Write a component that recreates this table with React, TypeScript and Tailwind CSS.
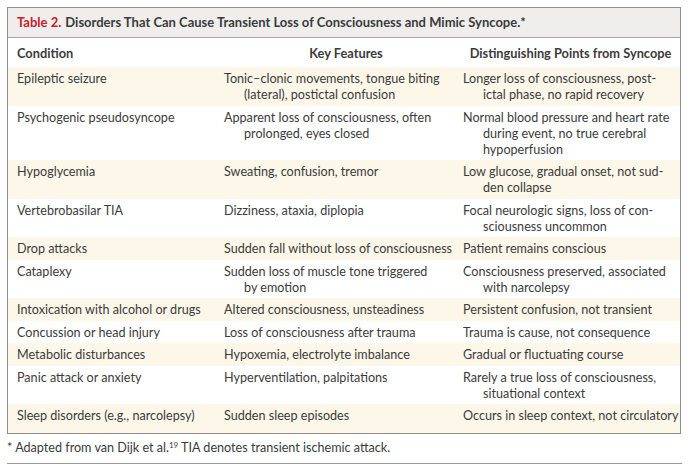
import React from "react";

type Row = {
  condition: string;
  features: string[];
  points: string[];
};

const rows: Row[] = [
  {
    condition: "Epileptic seizure",
    features: ["Tonic–clonic movements, tongue biting", "(lateral), postictal confusion"],
    points: ["Longer loss of consciousness, post-", "ictal phase, no rapid recovery"],
  },
  {
    condition: "Psychogenic pseudosyncope",
    features: ["Apparent loss of consciousness, often", "prolonged, eyes closed"],
    points: ["Normal blood pressure and heart rate", "during event, no true cerebral", "hypoperfusion"],
  },
  {
    condition: "Hypoglycemia",
    features: ["Sweating, confusion, tremor"],
    points: ["Low glucose, gradual onset, not sud-", "den collapse"],
  },
  {
    condition: "Vertebrobasilar TIA",
    features: ["Dizziness, ataxia, diplopia"],
    points: ["Focal neurologic signs, loss of con-", "sciousness uncommon"],
  },
  {
    condition: "Drop attacks",
    features: ["Sudden fall without loss of consciousness"],
    points: ["Patient remains conscious"],
  },
  {
    condition: "Cataplexy",
    features: ["Sudden loss of muscle tone triggered", "by emotion"],
    points: ["Consciousness preserved, associated", "with narcolepsy"],
  },
  {
    condition: "Intoxication with alcohol or drugs",
    features: ["Altered consciousness, unsteadiness"],
    points: ["Persistent confusion, not transient"],
  },
  {
    condition: "Concussion or head injury",
    features: ["Loss of consciousness after trauma"],
    points: ["Trauma is cause, not consequence"],
  },
  {
    condition: "Metabolic disturbances",
    features: ["Hypoxemia, electrolyte imbalance"],
    points: ["Gradual or fluctuating course"],
  },
  {
    condition: "Panic attack or anxiety",
    features: ["Hyperventilation, palpitations"],
    points: ["Rarely a true loss of consciousness,", "situational context"],
  },
  {
    condition: "Sleep disorders (e.g., narcolepsy)",
    features: ["Sudden sleep episodes"],
    points: ["Occurs in sleep context, not circulatory"],
  },
];

function Lines({ lines }: { lines: string[] }) {
  return (
    <>
      {lines.map((l, i) => (
        <React.Fragment key={i}>
          {i > 0 && <br />}
          <span className="whitespace-nowrap">{l}</span>
        </React.Fragment>
      ))}
    </>
  );
}

export default function App() {
  return (
    <div
      className="w-[690px] h-[471px] bg-white text-[#3b3b3b] pt-[7px] pl-[7px]"
      style={{ fontFamily: "Lato, 'Open Sans', sans-serif" }}
    >
      <div className="w-[674px] border border-[#8e8e8e]">
        {/* title bar */}
        <div className="h-[30px] flex items-center pl-[9px] bg-[#efeeec] border-b border-[#a5a5a5] text-[13px] font-bold">
          <span className="text-[#c8202f] mr-[4px]">Table 2.</span>
          <span>Disorders That Can Cause Transient Loss of Consciousness and Mimic Syncope.*</span>
        </div>

        {/* header */}
        <div className="grid grid-cols-[207px_240px_1fr] text-[12.8px] leading-[16px] font-bold pt-[7px] pb-[6px]">
          <div className="pl-[9px]">Condition</div>
          <div className="pl-[22px] text-center">Key Features</div>
          <div className="pl-[8px] pr-[2px] text-center">Distinguishing Points from Syncope</div>
        </div>

        {rows.map((r, i) => (
          <div
            key={r.condition}
            className={`grid grid-cols-[207px_240px_1fr] text-[12.6px] leading-[16px] pt-[4px] ${
              i === rows.length - 1 ? "pb-[9px]" : "pb-[2.5px]"
            } ${i % 2 === 0 ? "bg-[#fcf7e9]" : "bg-white"}`}
          >
            <div className="pl-[9px] whitespace-nowrap">{r.condition}</div>
            <div className="pl-[29px] indent-[-20px]">
              <Lines lines={r.features} />
            </div>
            <div className="pl-[28px] indent-[-20px]">
              <Lines lines={r.points} />
            </div>
          </div>
        ))}
      </div>

      {/* footnote */}
      <div className="w-[675px] border-b border-[#9a9a9a] pt-[6px] pb-[7px] text-[12.6px] leading-[16px]">
        * Adapted from van Dijk et al.<sup className="text-[8px]">19</sup> TIA denotes transient ischemic attack.
      </div>
    </div>
  );
}
